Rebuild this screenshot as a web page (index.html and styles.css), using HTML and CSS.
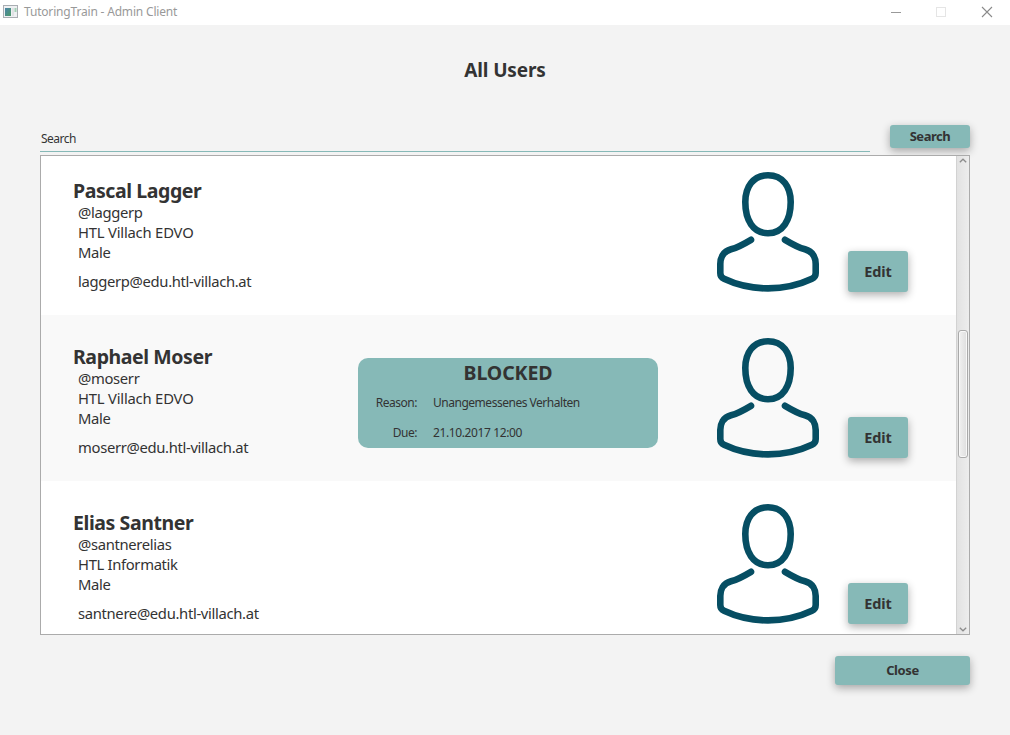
FILE: index.html
```html
<!DOCTYPE html>
<html lang="en">
<head>
<meta charset="utf-8">
<title>TutoringTrain - Admin Client</title>
<link rel="stylesheet" href="styles.css">
</head>
<body>
<svg width="0" height="0" class="defs">
  <symbol id="person" viewBox="0 0 104 122">
    <g fill="none" stroke="#064e63" stroke-width="6.600" stroke-linecap="round" stroke-linejoin="round">
      <path d="M52 4.300C37 4.300 29.300 16 29.300 31C29.300 49 37 62.200 52 62.200S74.700 49 74.700 31C74.700 16 67 4.300 52 4.300Z"/>
      <path d="M35 68.800C28 73 22 76.500 15 78.300C7 80.500 4.300 87 4.300 93V102C4.300 105 5 106.500 8 107.800C35 120.600 69 120.600 96 107.800C99 106.500 99.700 105 99.700 102V93C99.700 87 97 80.500 89 78.300C82 76.500 76 73 69 68.800"/>
    </g>
  </symbol>
</svg>
<header class="titlebar">
  <svg class="app-icon" width="15" height="13" viewBox="0 0 15 13">
    <defs><linearGradient id="pane" x2="1" y2="1"><stop stop-color="#4a83a8"/><stop offset="1" stop-color="#4c9a68"/></linearGradient></defs>
    <rect x=".5" y=".5" width="14" height="12" fill="#eef0f2" stroke="#a9adb2"/>
    <rect x="2" y="3" width="6" height="8" fill="url(#pane)"/>
    <rect x="11.500" y="3" width="2" height="4" fill="#a3d1b5"/>
    <rect x="9" y="3" width="2" height="8" fill="#dfe1e4"/>
  </svg>
  <span class="app-title">TutoringTrain - Admin Client</span>
  <svg class="controls" width="104" height="12" viewBox="0 0 104 12" fill="none">
    <path d="M1 6.500H11" stroke="#999"/>
    <rect x="46.500" y="1.500" width="9" height="9" stroke="#e5e5e5"/>
    <path d="M92 1L102 11M102 1L92 11" stroke="#8a8a8a" stroke-width="1.100"/>
  </svg>
</header>
<main class="page">
  <h1 class="heading">All Users</h1>
  <div class="search">
    <div class="field">Search</div>
    <button class="btn search-btn">Search</button>
  </div>
  <div class="list">
    <div class="rows">
      <section class="row">
        <div class="info"><h2>Pascal Lagger</h2><p>@laggerp</p><p class="school">HTL Villach EDVO</p><p>Male</p><p class="mail">laggerp@edu.htl-villach.at</p></div>
        <div class="middle"></div>
        <svg class="avatar"><use href="#person"/></svg>
        <button class="btn edit">Edit</button>
      </section>
      <section class="row alt">
        <div class="info"><h2>Raphael Moser</h2><p>@moserr</p><p class="school">HTL Villach EDVO</p><p>Male</p><p class="mail">moserr@edu.htl-villach.at</p></div>
        <div class="middle">
          <div class="blocked">
            <h3>BLOCKED</h3>
            <dl><dt>Reason:</dt><dd>Unangemessenes Verhalten</dd><dt>Due:</dt><dd class="due">21.10.2017 12:00</dd></dl>
          </div>
        </div>
        <svg class="avatar"><use href="#person"/></svg>
        <button class="btn edit">Edit</button>
      </section>
      <section class="row">
        <div class="info"><h2>Elias Santner</h2><p>@santnerelias</p><p>HTL Informatik</p><p>Male</p><p class="mail">santnere@edu.htl-villach.at</p></div>
        <div class="middle"></div>
        <svg class="avatar"><use href="#person"/></svg>
        <button class="btn edit">Edit</button>
      </section>
    </div>
    <div class="scrollbar">
      <svg width="8" height="5" viewBox="0 0 8 5"><path d="M.8 4.200L4 1.200L7.200 4.200" fill="none" stroke="#8c8c8c" stroke-width="1.300"/></svg>
      <div class="thumb"></div>
      <svg class="down" width="8" height="5" viewBox="0 0 8 5"><path d="M.8 .8L4 3.800L7.200 .8" fill="none" stroke="#8c8c8c" stroke-width="1.300"/></svg>
    </div>
  </div>
  <button class="btn close">Close</button>
</main>
</body>
</html>
```
FILE: styles.css
```css
* { box-sizing: border-box; }
body {
  margin: 0;
  width: 1010px;
  height: 735px;
  overflow: hidden;
  background: #f3f3f3;
  color: #333;
  font-family: "Noto Sans", "Open Sans", sans-serif;
  display: flex;
  flex-direction: column;
}
h1, h2, h3, p, dl, dd { margin: 0; }
.defs { position: absolute; }
.titlebar {
  height: 25px;
  flex: none;
  background: #fff;
  display: flex;
  align-items: center;
  padding: 0 16px 1px 3px;
  color: #999;
}
.app-icon { margin-top: -1px; }
.app-title { margin: -1px 0 0 6px; font-size: 12px; letter-spacing: -0.18px; }
.controls { margin-left: auto; }
.page { padding: 0 40px; display: flex; flex-direction: column; }
.heading { height: 100px; padding-top: 32px; font-size: 19px; line-height: 27px; text-align: center; letter-spacing: -0.15px; }
.search { display: flex; gap: 20px; height: 30px; }
.field {
  flex: 1;
  height: 27px;
  border-bottom: 1px solid #86b9b7;
  padding-left: 1px;
  font-size: 12px;
  line-height: 27px;
  letter-spacing: -0.5px;
}
.btn {
  border: 0;
  border-radius: 3px;
  padding: 0;
  background: #86b9b7;
  color: #333;
  font: bold 14.500px/1 "Noto Sans", "Open Sans", sans-serif;
  letter-spacing: -0.1px;
  box-shadow: 0 3px 9px rgba(0, 0, 0, .32);
}
.search-btn { width: 80px; height: 23px; font-size: 13px; letter-spacing: -0.45px; }
.list {
  height: 480px;
  border: 1px solid #ababab;
  background: #fff;
  display: flex;
  overflow: hidden;
}
.rows { width: 915px; margin-top: -7px; }
.row { height: 166px; display: flex; background: #fff; }
.alt { background: #f9f9f9; }
.info { width: 317px; padding: 31px 0 0 37px; font-size: 14.800px; line-height: 20px; white-space: nowrap; letter-spacing: -0.33px; }
.info h2 { margin-left: -5px; font-size: 19.500px; line-height: 22px; letter-spacing: -0.42px; }
.school { letter-spacing: -0.2px; }
.mail { margin-top: 9px; }
.middle { width: 300px; padding-top: 43px; }
.blocked { height: 90px; border-radius: 10px; background: #86b9b7; }
.blocked h3 { font-size: 19.500px; line-height: 30px; text-align: center; letter-spacing: -0.1px; }
.blocked dl { display: grid; grid-template-columns: 59px 1fr; column-gap: 16px; font-size: 12px; line-height: 30px; letter-spacing: -0.48px; }
.blocked .due { letter-spacing: -0.38px; }
.blocked dt { text-align: right; }
.avatar { width: 104px; height: 122px; margin: 22px 0 0 58px; flex: none; }
.edit { width: 60px; height: 41px; margin: 102px 0 0 28px; }
.scrollbar {
  width: 13px;
  flex: none;
  display: flex;
  flex-direction: column;
  align-items: center;
  padding: 2px 0;
  border-left: 1px solid #d2d2d2;
  background: linear-gradient(90deg, #e2e2e2, #ededed);
}
.thumb {
  width: 10px;
  height: 128px;
  margin-top: 167px;
  border: 1px solid #aaa;
  border-radius: 3px;
  background: linear-gradient(90deg, #f1f1f1, #dedede);
  box-shadow: inset 0 0 0 1px #f8f8f8;
}
.down { margin-top: auto; }
.close { width: 135px; height: 29px; margin: 21px 0 0 auto; font-size: 13px; letter-spacing: -0.4px; }
```
